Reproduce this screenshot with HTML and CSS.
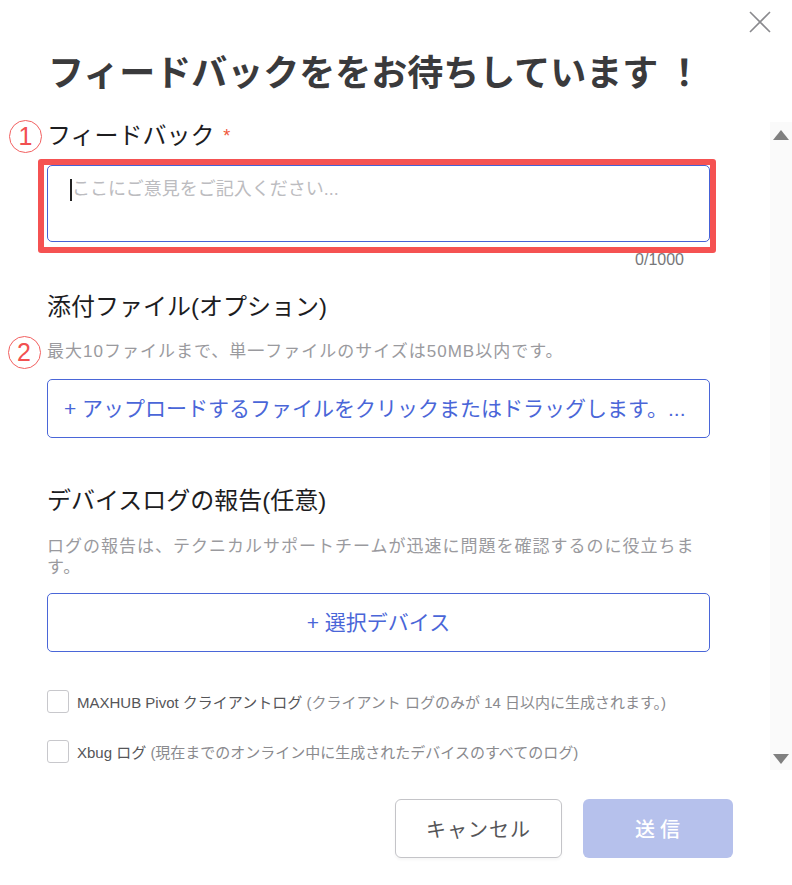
FILE: index.html
```html
<!DOCTYPE html>
<html lang="ja">
<head>
    <meta charset="UTF-8">
    <meta name="viewport" content="width=device-width, initial-scale=1.0">
    <title>フィードバック</title>
    <link rel="stylesheet" href="styles.css">
</head>
<body>
    <div class="dialog">
        <button class="close" aria-label="閉じる">
            <svg width="22" height="22" viewBox="0 0 22 22">
                <path d="M1 1 L21 21 M21 1 L1 21" stroke="#8a8a8e" stroke-width="1.6" fill="none"/>
            </svg>
        </button>

        <h1 class="title">フィードバックををお待ちしています ！</h1>

        <div class="body">
            <div class="content">
                <div class="field-label marked">
                    <span class="mark mark-1">1</span>
                    フィードバック <span class="req">*</span>
                </div>
                <div class="textarea-wrap">
                    <div class="highlight"></div>
                    <div class="textarea">
                        <span class="caret"></span><span class="placeholder">ここにご意見をご記入ください...</span>
                    </div>
                </div>
                <div class="counter">0/1000</div>

                <div class="field-label section-2">添付ファイル(オプション)</div>
                <div class="hint marked">
                    <span class="mark mark-2">2</span>
                    最大10ファイルまで、単一ファイルのサイズは50MB以内です。
                </div>
                <div class="upload">+ アップロードするファイルをクリックまたはドラッグします。...</div>

                <div class="field-label section-3">デバイスログの報告(任意)</div>
                <div class="hint hint-wide">ログの報告は、テクニカルサポートチームが迅速に問題を確認するのに役立ちます。</div>
                <div class="select-device">+ 選択デバイス</div>

                <label class="check first">
                    <span class="box"></span>
                    <span class="check-text">MAXHUB Pivot クライアントログ <span class="sub">(クライアント ログのみが 14 日以内に生成されます。)</span></span>
                </label>
                <label class="check">
                    <span class="box"></span>
                    <span class="check-text">Xbug ログ <span class="sub">(現在までのオンライン中に生成されたデバイスのすべてのログ)</span></span>
                </label>
            </div>
            <div class="scrollbar">
                <span class="arrow up"></span>
                <span class="arrow down"></span>
            </div>
        </div>

        <div class="footer">
            <button class="btn cancel">キャンセル</button>
            <button class="btn submit">送信</button>
        </div>
    </div>
</body>
</html>
```

FILE: styles.css
```css
body {
    margin: 0;
    font-family: "Liberation Sans", "Noto Sans CJK JP", sans-serif;
    background: #ffffff;
}

.dialog {
    position: relative;
    width: 792px;
    height: 885px;
    background: #ffffff;
    overflow: hidden;
}

.close {
    position: absolute;
    top: 11px;
    right: 21px;
    padding: 0;
    border: none;
    background: none;
    cursor: pointer;
}

.title {
    margin: 0;
    padding: 46px 0 0 48px;
    font-family: "Noto Sans CJK JP", sans-serif;
    font-size: 36px;
    line-height: 48px;
    font-weight: 700;
    color: #3a3a3c;
}

.body {
    display: flex;
    margin-top: 28px;
    height: 648px;
}

.content {
    flex: 1;
    padding: 0 60px 0 47px;
}

.field-label {
    font-size: 24px;
    line-height: 28px;
    color: #1d1d1f;
}

.marked {
    position: relative;
}

.mark {
    position: absolute;
    left: -38px;
    width: 31px;
    height: 31px;
    border: 1.5px solid #f26060;
    border-radius: 50%;
    color: #f25050;
    font-family: "Liberation Sans", sans-serif;
    font-size: 25px;
    line-height: 31px;
    text-align: center;
}

.mark-1 {
    top: -2px;
}

.mark-2 {
    top: -5px;
    left: -39px;
}

.req {
    color: #f0573a;
    font-size: 18px;
    vertical-align: top;
    margin-left: 2px;
}

.textarea-wrap {
    position: relative;
    margin-top: 15px;
}

.highlight {
    position: absolute;
    top: -6px;
    left: -9px;
    right: -6px;
    bottom: -11px;
    border: 6px solid #f55252;
    border-radius: 3px;
}

.textarea {
    position: relative;
    box-sizing: border-box;
    height: 77px;
    border: 1px solid #4561d6;
    border-radius: 5px;
    padding: 11px 22px;
    display: flex;
    align-items: flex-start;
}

.caret {
    width: 2px;
    height: 22px;
    margin-top: 2px;
    background: #222;
}

.placeholder {
    font-size: 18px;
    line-height: 24px;
    color: #bcbcc0;
}

.counter {
    margin-top: 8px;
    padding-right: 26px;
    text-align: right;
    font-size: 16px;
    line-height: 20px;
    color: #77777a;
}

.section-2 {
    margin-top: 23px;
}

.hint {
    margin-top: 20px;
    font-size: 17px;
    line-height: 22px;
    letter-spacing: 1px;
    color: #9a9a9e;
}

.hint-wide {
    margin-top: 21px;
    line-height: 21px;
}

.upload,
.select-device {
    box-sizing: border-box;
    height: 59px;
    margin-top: 16px;
    border: 1px solid #4a66d8;
    border-radius: 5px;
    color: #4a66d8;
    font-size: 21px;
    line-height: 57px;
    white-space: nowrap;
    overflow: hidden;
}

.upload {
    padding-left: 16px;
}

.section-3 {
    margin-top: 49px;
}

.select-device {
    margin-top: 15px;
    text-align: center;
}

.check {
    display: flex;
    align-items: center;
    gap: 8px;
    margin-top: 26px;
    height: 24px;
}

.check.first {
    margin-top: 37px;
}

.box {
    box-sizing: border-box;
    width: 22px;
    height: 23px;
    border: 1px solid #c8c8cc;
    border-radius: 3px;
    background: #fff;
}

.check-text {
    font-size: 15px;
    color: #555558;
}

.sub {
    color: #8a8a8e;
}

.scrollbar {
    width: 22px;
    background: #fafafa;
    display: flex;
    flex-direction: column;
    justify-content: space-between;
    align-items: center;
    padding: 8px 0 6px;
    box-sizing: border-box;
}

.arrow {
    width: 0;
    height: 0;
    border-left: 8px solid transparent;
    border-right: 8px solid transparent;
}

.arrow.up {
    border-bottom: 10px solid #808080;
}

.arrow.down {
    border-top: 10px solid #808080;
}

.footer {
    display: flex;
    justify-content: flex-end;
    gap: 21px;
    padding: 29px 59px 0 0;
}

.btn {
    box-sizing: border-box;
    height: 59px;
    border-radius: 6px;
    font-family: "Noto Sans CJK JP", sans-serif;
    font-size: 20px;
    cursor: pointer;
}

.cancel {
    width: 167px;
    background: #ffffff;
    border: 1px solid #c4c4c8;
    color: #555558;
    letter-spacing: 1px;
    box-shadow: 0 2px 3px rgba(0, 0, 0, 0.04);
}

.submit {
    width: 150px;
    background: #b6c1ec;
    border: none;
    color: #ffffff;
    font-weight: 500;
    letter-spacing: 5px;
    padding-left: 10px;
}
```
